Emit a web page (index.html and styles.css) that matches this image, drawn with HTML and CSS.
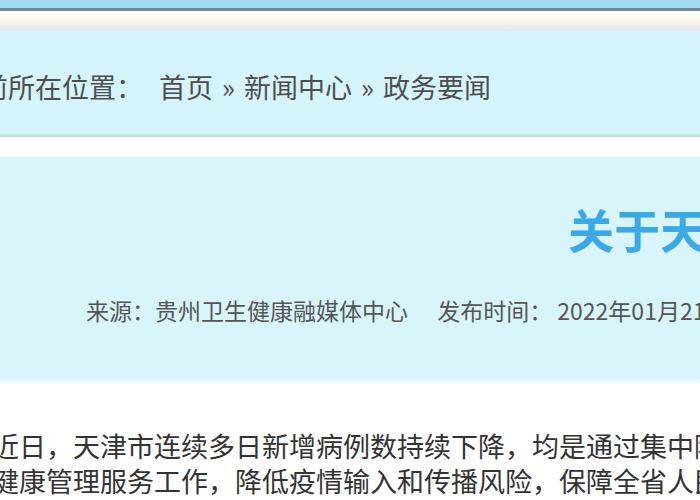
FILE: index.html
```html
<!DOCTYPE html>
<html lang="zh-CN">
  <head>
    <meta charset="UTF-8" />
    <meta name="viewport" content="width=device-width, initial-scale=1.0"/>
    <title>关于天津市来（返）黔人员健康管理服务的通告</title>
    <link rel="stylesheet" href="styles.css">
  </head>
  <body>
    <div class="topbar"></div>
    <div class="subbar"></div>

    <div class="page">
      <div class="crumbs">
        <span class="crumbs-label">当前所在位置：</span>
        <a href="#">首页</a><span class="sep">»</span><a href="#">新闻中心</a><span class="sep">»</span><a href="#">政务要闻</a>
      </div>

      <div class="article-head">
        <h1 class="title">关于天津市来（返）黔人员健康管理服务的通告</h1>
        <div class="meta">
          <span class="source">来源：贵州卫生健康融媒体中心</span>
          <span>发布时间： 2022年01月21日</span>
        </div>
      </div>

      <div class="article-body">
        <p>近日，天津市连续多日新增病例数持续下降，均是通过集中隔离发现，为做好来黔返黔人员健康管理服务工作，降低疫情输入和传播风险，保障全省人民群众身体健康和生命安全，现将有关事项通告如下。</p>
      </div>
    </div>
  </body>
</html>
```

FILE: styles.css
```css
body {
  margin: 0;
  font-family: "Microsoft YaHei", "Noto Sans CJK SC", sans-serif;
  background: #fff;
  overflow: hidden;
}

.topbar {
  height: 8px;
  background: #a2daef;
  border-bottom: 3px solid #6d8c9a;
}

.subbar {
  height: 20px;
  background: linear-gradient(#fffcf4, #fbf8f2 40%, #e9e7e7);
}

.page {
  margin-left: -46px;
  width: 1500px;
}

.crumbs {
  height: 106px;
  line-height: 112px;
  font-size: 27px;
  color: #4e4e4e;
  background: linear-gradient(#d6f4fb, #d6f4fb 96%, #b7dbe3);
}

.crumbs a {
  color: #4e4e4e;
  text-decoration: none;
}

.crumbs-label {
  margin-right: 10px;
}

.sep {
  margin: 0 9px;
}

.article-head {
  margin-top: 20px;
  height: 226px;
  padding-top: 46px;
  box-sizing: border-box;
  background: linear-gradient(#d8f5fc, #d8f5fc 98%, #f4fcfe);
}

.title {
  margin: 0;
  padding-left: 614px;
  font-size: 46px;
  line-height: 50px;
  font-weight: bold;
  color: #3aa9e8;
  white-space: nowrap;
}

.meta {
  margin-top: 42px;
  padding-left: 132px;
  font-size: 23px;
  line-height: 30px;
  color: #555;
  white-space: nowrap;
}

.source {
  margin-right: 24px;
}

.article-body {
  padding-top: 45px;
  width: 1118px;
}

.article-body p {
  margin: 0;
  padding-left: 38px;
  font-size: 27px;
  line-height: 35px;
  color: #333;
}
```
